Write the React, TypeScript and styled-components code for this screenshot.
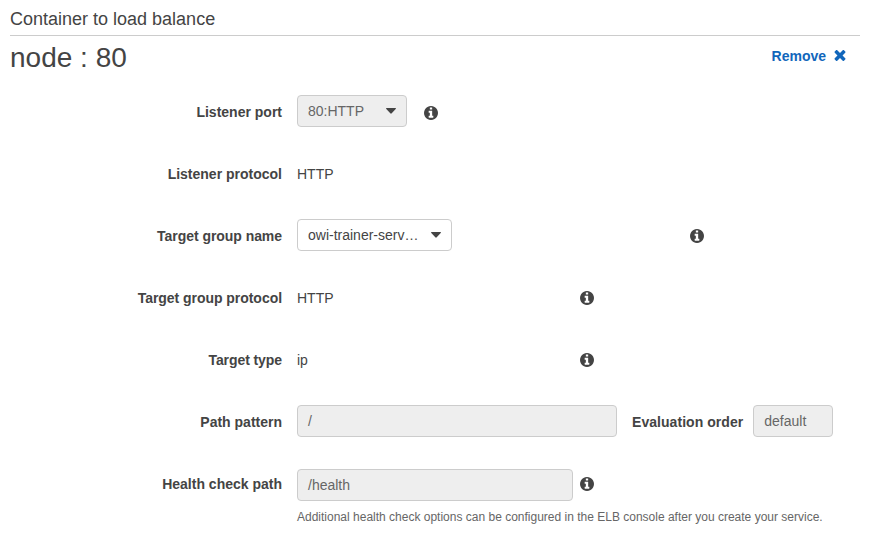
import React from "react";
import styled, { createGlobalStyle } from "styled-components";

const GlobalStyle = createGlobalStyle`
  * { box-sizing: border-box; }
  body {
    margin: 0;
    background: #fff;
    color: #444;
    font: 14px/20px "Liberation Sans", Arial, sans-serif;
  }
`;

const Page = styled.main`
  width: 875px;
  height: 536px;
  padding: 0 15px 0 10px;
  overflow: hidden;
`;

const SectionTitle = styled.h2`
  margin: 0;
  height: 36px;
  padding-top: 8px;
  border-bottom: 1px solid #ccc;
  font-size: 18px;
  line-height: 22px;
  font-weight: 400;
`;

const Header = styled.header`
  display: flex;
  justify-content: space-between;
  height: 45px;
  padding-right: 14px;
`;

const ContainerName = styled.h1`
  margin: 0;
  padding-top: 5px;
  font-size: 28px;
  line-height: 34px;
  font-weight: 400;
`;

const RemoveButton = styled.button`
  display: flex;
  align-items: center;
  gap: 8px;
  height: 20px;
  margin-top: 10px;
  padding: 0;
  border: 0;
  background: none;
  color: #1166bb;
  font: bold 14px/20px "Liberation Sans", Arial, sans-serif;
`;

const Row = styled.div`
  display: grid;
  grid-template-columns: 272px 1fr;
  column-gap: 15px;
  align-items: center;
  height: 62px;
`;

const Label = styled.span<{ $spacing?: number }>`
  font-weight: 700;
  text-align: right;
  white-space: nowrap;
  letter-spacing: ${(p) => p.$spacing ?? 0}px;
`;

const Content = styled.div<{ $gap?: number }>`
  display: flex;
  align-items: center;
  gap: ${(p) => p.$gap ?? 0}px;
`;

const Value = styled.span`
  width: 283px;
`;

const Field = styled.div<{ $width: number; $disabled?: boolean; $drop?: number }>`
  display: flex;
  flex: none;
  align-items: center;
  justify-content: space-between;
  width: ${(p) => p.$width}px;
  height: 32px;
  padding: 0 10px;
  margin-top: ${(p) => p.$drop ?? -2}px;
  border: 1px solid #ccc;
  border-radius: 4px;
  background: ${(p) => (p.$disabled ? "#eee" : "#fff")};
  color: ${(p) => (p.$disabled ? "#666" : "#444")};
  white-space: nowrap;
`;

const InlineLabel = styled(Label)`
  padding: 0 10px 0 15px;
`;

const Caret = styled.svg`
  flex: none;
  width: 10px;
  height: 6px;
  fill: #444;
`;

const Icon = styled.svg<{ $size: number; $drop?: number }>`
  flex: none;
  width: ${(p) => p.$size}px;
  height: ${(p) => p.$size}px;
  margin-top: ${(p) => p.$drop ?? 0}px;
  fill: currentColor;
`;

const Hint = styled.p`
  margin: -8px 0 0 287px;
  color: #666;
  font-size: 12px;
  line-height: 20px;
  white-space: nowrap;
`;

const InfoIcon = ({ drop }: { drop?: number }) => (
  <Icon $size={14} $drop={drop} viewBox="128 128 1536 1536" aria-label="Info">
    <path d="M1152 1376v-160q0-14-9-23t-23-9h-96v-512q0-14-9-23t-23-9h-320q-14 0-23 9t-9 23v160q0 14 9 23t23 9h96v320h-96q-14 0-23 9t-9 23v160q0 14 9 23t23 9h448q14 0 23-9t9-23zm-128-896v-160q0-14-9-23t-23-9h-192q-14 0-23 9t-9 23v160q0 14 9 23t23 9h192q14 0 23-9t9-23zm640 416q0 209-103 385.5t-279.5 279.5-385.5 103-385.5-103-279.5-279.5-103-385.5 103-385.5 279.5-279.5 385.5-103 385.5 103 279.5 279.5 103 385.5z" />
  </Icon>
);

const CloseIcon = () => (
  <Icon $size={12} viewBox="248 376 1296 1296" aria-hidden="true">
    <path d="M1490 1322q0 40-28 68l-136 136q-28 28-68 28t-68-28l-294-294-294 294q-28 28-68 28t-68-28l-136-136q-28-28-28-68t28-68l294-294-294-294q-28-28-28-68t28-68l136-136q28-28 68-28t68 28l294 294 294-294q28-28 68-28t68 28l136 136q28 28 28 68t-28 68l-294 294 294 294q28 28 28 68z" />
  </Icon>
);

const CaretIcon = () => (
  <Caret viewBox="0 0 10 6" aria-hidden="true">
    <path d="M0.6 0H9.4Q10.4 0 9.7 1L5.7 5.3Q5 6 4.3 5.3L0.3 1Q-0.4 0 0.6 0Z" />
  </Caret>
);

export default function App() {
  return (
    <>
      <GlobalStyle />
      <Page>
        <SectionTitle>Container to load balance</SectionTitle>
        <Header>
          <ContainerName>node : 80</ContainerName>
          <RemoveButton>
            Remove
            <CloseIcon />
          </RemoveButton>
        </Header>
        <Row>
          <Label>Listener port</Label>
          <Content $gap={17}>
            <Field $width={110} $disabled>
              80:HTTP
              <CaretIcon />
            </Field>
            <InfoIcon drop={2} />
          </Content>
        </Row>
        <Row>
          <Label>Listener protocol</Label>
          <Content>
            <Value>HTTP</Value>
          </Content>
        </Row>
        <Row>
          <Label $spacing={-0.05}>Target group name</Label>
          <Content $gap={238}>
            <Field $width={155}>
              owi-trainer-serv…
              <CaretIcon />
            </Field>
            <InfoIcon />
          </Content>
        </Row>
        <Row>
          <Label $spacing={-0.04}>Target group protocol</Label>
          <Content>
            <Value>HTTP</Value>
            <InfoIcon />
          </Content>
        </Row>
        <Row>
          <Label $spacing={-0.08}>Target type</Label>
          <Content>
            <Value>ip</Value>
            <InfoIcon />
          </Content>
        </Row>
        <Row>
          <Label>Path pattern</Label>
          <Content>
            <Field $width={320} $disabled>/</Field>
            <InlineLabel $spacing={0.05}>Evaluation order</InlineLabel>
            <Field $width={80} $disabled>default</Field>
          </Content>
        </Row>
        <Row>
          <Label>Health check path</Label>
          <Content $gap={7}>
            <Field $width={276} $disabled $drop={2}>/health</Field>
            <InfoIcon />
          </Content>
        </Row>
        <Hint>
          Additional health check options can be configured in the ELB console after you create your service.
        </Hint>
      </Page>
    </>
  );
}
